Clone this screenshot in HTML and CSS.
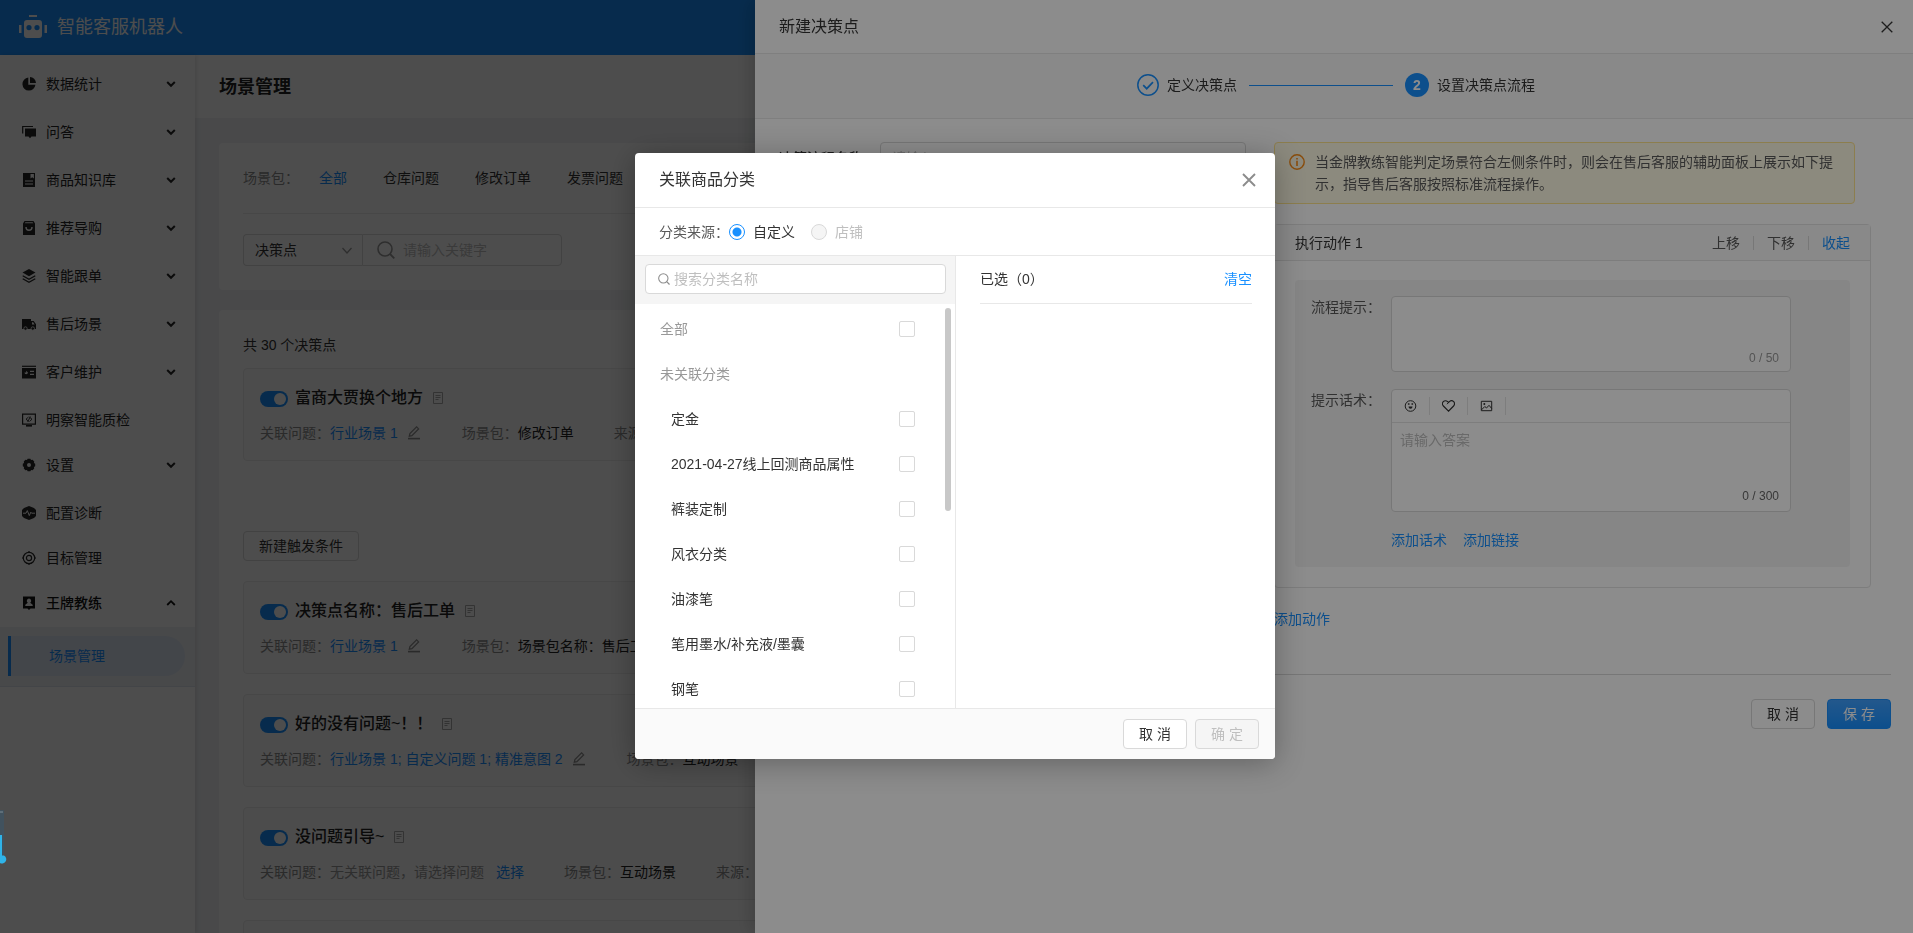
FILE: index.html
```html
<!DOCTYPE html>
<html lang="zh-CN">
<head>
<meta charset="utf-8">
<title>智能客服机器人</title>
<link rel="stylesheet" href="styles.css">
</head>
<body>
<svg class="defs" aria-hidden="true">
  <symbol id="down" viewBox="0 0 10 10"><path d="M1.2 3 5 6.8 8.8 3" fill="none" stroke="currentColor" stroke-width="2"/></symbol>
  <symbol id="up" viewBox="0 0 10 10"><path d="M1.2 7 5 3.2 8.8 7" fill="none" stroke="currentColor" stroke-width="1.8"/></symbol>
  <symbol id="note" viewBox="0 0 12 12"><path d="M1.5.5h9v11h-9zM3.5 3.5h5M3.5 5.5h5M3.5 7.5h3" fill="none" stroke="currentColor"/></symbol>
  <symbol id="edit" viewBox="0 0 14 14"><path d="M1 12.6h12" stroke="currentColor" stroke-width="1.6"/><path d="M2.3 10.2 2.9 7.6 9.6.9l2 2-6.700 6.700z" fill="none" stroke="currentColor" stroke-width="1.2"/></symbol>
  <symbol id="search" viewBox="0 0 18 18"><circle cx="8" cy="8" r="7" fill="none" stroke="currentColor" stroke-width="1.600"/><path d="m13 13 4.300 4.300" stroke="currentColor" stroke-width="1.800"/></symbol>
</svg>

<div class="app">
  <header class="topbar">
    <svg class="logo" viewBox="0 0 28 24"><path d="M10 0h8v2h-8zM0 10h2.500v8H0zM25.500 10H28v8h-2.500z" fill="#fff"/><path fill-rule="evenodd" d="M8 5h12a3 3 0 0 1 3 3v12a3 3 0 0 1-3 3H8a3 3 0 0 1-3-3V8a3 3 0 0 1 3-3zm2 5a2.600 2.600 0 1 0 0 5.200 2.600 2.600 0 0 0 0-5.200zm8 0a2.600 2.600 0 1 0 0 5.200 2.600 2.600 0 0 0 0-5.200z" fill="#fff"/></svg>
    <span class="brand">智能客服机器人</span>
  </header>
  <div class="shell">
    <nav class="side">
      <a class="nav sub" href="#"><svg viewBox="0 0 14 14"><path d="M6.300.6A6.500 6.500 0 1 0 13.400 7.700H6.300zM8 0v6h6A6.300 6.300 0 0 0 8 0z" fill="currentColor"/></svg><span>数据统计</span><svg class="arr"><use href="#down"/></svg></a>
      <a class="nav sub" href="#"><svg viewBox="0 0 14 14"><path d="M3 3.500h11v8H9.500L8 13.300 6.500 11.500H3z" fill="currentColor"/><path d="M.7 8.500V1.500H11" fill="none" stroke="currentColor" stroke-width="1.200"/></svg><span>问答</span><svg class="arr"><use href="#down"/></svg></a>
      <a class="nav sub" href="#"><svg viewBox="0 0 14 14"><path fill-rule="evenodd" d="M1 0h12v14H1zM8.500 1v4.500l1.700-1.300 1.700 1.300V1zM3 7.500v1h8v-1zm0 3v1h8v-1z" fill="currentColor"/></svg><span>商品知识库</span><svg class="arr"><use href="#down"/></svg></a>
      <a class="nav sub" href="#"><svg viewBox="0 0 14 14"><path fill-rule="evenodd" d="M2.500 0h9L13 2.500V14H1V2.500zM2.700 2.300h8.600l-.7-1H3.400z" fill="currentColor"/><path d="M4 6a3 3.200 0 0 0 6 0" fill="none" stroke="#fff" stroke-width="1.400"/></svg><span>推荐导购</span><svg class="arr"><use href="#down"/></svg></a>
      <a class="nav sub" href="#"><svg viewBox="0 0 14 14"><path d="m7 0 6.500 3.600L7 7.200.5 3.600z" fill="currentColor"/><path d="M.7 6.700 7 10.200l6.300-3.500M.7 9.700 7 13.200l6.300-3.500" fill="none" stroke="currentColor" stroke-width="1.300"/></svg><span>智能跟单</span><svg class="arr"><use href="#down"/></svg></a>
      <a class="nav sub" href="#"><svg viewBox="0 0 14 14"><path fill-rule="evenodd" d="M0 2h9v2h2.700L14 7.200V12H0zM10 5.200v2.300h2.600l-1.400-2.300z" fill="currentColor"/><circle cx="3.500" cy="11.500" r="1.700" fill="currentColor" stroke="#fff" stroke-width=".8"/><circle cx="10.800" cy="11.500" r="1.700" fill="currentColor" stroke="#fff" stroke-width=".8"/></svg><span>售后场景</span><svg class="arr"><use href="#down"/></svg></a>
      <a class="nav sub" href="#"><svg viewBox="0 0 14 14"><path d="M0 .7h14v1.200H0z" fill="currentColor"/><path fill-rule="evenodd" d="M0 3h14v10.500H0zM2.500 7.500a1.700 1.700 0 0 0 3.400 0L4.200 5.800v1.700zM8 5.700v1.200h4V5.700zm0 3v1.200h4V8.700z" fill="currentColor"/></svg><span>客户维护</span><svg class="arr"><use href="#down"/></svg></a>
      <a class="nav" href="#"><svg viewBox="0 0 14 14"><path d="M.6 1.200h12.800v10H.6z" fill="none" stroke="currentColor" stroke-width="1.200"/><path d="M4 12h6v1.600H4z" fill="currentColor"/><path d="M6.500 4 4 6.200l2.500 2M7.500 8.500 10 6.200l-2.500-2M8.300 3.500 5.700 9" fill="none" stroke="currentColor" stroke-width=".9"/></svg><span>明察智能质检</span></a>
      <a class="nav sub" href="#"><svg viewBox="0 0 14 14"><path fill-rule="evenodd" d="m5.600.8 2.800 0 .6 1.200 1.600-.2 1.600 1.600-.2 1.700 1.200.7v2.400l-1.200.7.2 1.700-1.600 1.600-1.600-.2-.6 1.200H5.600L5 12l-1.600.2-1.600-1.600.2-1.700L.8 8.200V5.800L2 5.100l-.2-1.700 1.600-1.600L5 2zM7 5a2 2 0 1 0 0 4 2 2 0 0 0 0-4z" fill="currentColor"/></svg><span>设置</span><svg class="arr"><use href="#down"/></svg></a>
      <a class="nav" href="#"><svg viewBox="0 0 14 14"><path d="m7 0 5 2 2 2v6l-2 2-5 2-5-2-2-2V4l2-2z" fill="currentColor"/><path d="M1 7.200h3l1.300-2.600 2 5 1.500-3.400.8 1H13" fill="none" stroke="#fff"/></svg><span>配置诊断</span></a>
      <a class="nav" href="#"><svg viewBox="0 0 14 14" fill="none" stroke="currentColor" stroke-width="1.200"><circle cx="7" cy="7" r="5.700"/><circle cx="7" cy="7" r="2.600"/><path d="M7 0v2M7 12v2M0 7h2M12 7h2"/></svg><span>目标管理</span></a>
      <a class="nav open" href="#"><svg viewBox="0 0 14 14"><path fill-rule="evenodd" d="M1 .5h12v12H8.500L7 14l-1.500-1.500H1zM7 2.500a2.300 2.300 0 0 0-1.200 4.200L3.300 8.800V10h7.400V8.800L8.200 6.700A2.300 2.300 0 0 0 7 2.500z" fill="currentColor"/></svg><span>王牌教练</span><svg class="arr"><use href="#up"/></svg></a>
      <div class="submenu"><a class="subitem" href="#">场景管理</a></div>
    </nav>
    <main class="main">
      <div class="pagehead"><h1>场景管理</h1></div>
      <section class="card">
        <div class="filters"><span class="label">场景包：</span><a class="on" href="#">全部</a><a href="#">仓库问题</a><a href="#">修改订单</a><a href="#">发票问题</a></div>
        <div class="searchrow">
          <div class="selbox"><select aria-label="搜索类型"><option>决策点</option></select><svg viewBox="0 0 12 12"><path d="m1.500 3 4.500 5L10.500 3" fill="none" stroke="currentColor" stroke-width="1.300"/></svg></div>
          <label class="keybox"><svg><use href="#search"/></svg><input type="text" placeholder="请输入关键字"></label>
        </div>
      </section>
      <section class="card list">
        <p class="total">共 30 个决策点</p>
        <article class="point">
          <div class="phead"><button class="switch" type="button" aria-label="启用"></button><h2>富商大贾换个地方</h2><svg><use href="#note"/></svg></div>
          <div class="meta"><span>关联问题：</span><a href="#">行业场景 1</a><svg><use href="#edit"/></svg><span class="next">场景包：</span><b>修改订单</b><span class="next2">来源：</span></div>
        </article>
        <button class="btn trigger" type="button">新建触发条件</button>
        <article class="point">
          <div class="phead"><button class="switch" type="button" aria-label="启用"></button><h2>决策点名称：售后工单</h2><svg><use href="#note"/></svg></div>
          <div class="meta"><span>关联问题：</span><a href="#">行业场景 1</a><svg><use href="#edit"/></svg><span class="next">场景包：</span><b>场景包名称：售后工单</b></div>
        </article>
        <article class="point">
          <div class="phead"><button class="switch" type="button" aria-label="启用"></button><h2>好的没有问题~！！</h2><svg><use href="#note"/></svg></div>
          <div class="meta"><span>关联问题：</span><a href="#">行业场景 1; 自定义问题 1; 精准意图 2</a><svg><use href="#edit"/></svg><span class="next">场景包：</span><b>互动场景</b></div>
        </article>
        <article class="point">
          <div class="phead"><button class="switch" type="button" aria-label="启用"></button><h2>没问题引导~</h2><svg><use href="#note"/></svg></div>
          <div class="meta"><span>关联问题：</span><i>无关联问题，请选择问题</i><a class="pick" href="#">选择</a><span class="next1">场景包：</span><b>互动场景</b><span class="next2">来源：</span></div>
        </article>
        <article class="point"></article>
      </section>
    </main>
  </div>
</div>

<div class="mask"></div>

<aside class="drawer">
  <header class="dhead"><h2>新建决策点</h2><button type="button" class="x" aria-label="关闭"><svg viewBox="0 0 12 12"><path d="m.7.700 10.600 10.600M11.300.7.700 11.300" stroke="currentColor" stroke-width="1.300"/></svg></button></header>
  <div class="steps">
    <svg class="ok" viewBox="0 0 22 22"><circle cx="11" cy="11" r="10.200" fill="none" stroke="#1890ff" stroke-width="1.500"/><path d="m6.200 11.200 3.500 3.500 6.300-6.500" fill="none" stroke="#1890ff" stroke-width="1.700"/></svg>
    <span>定义决策点</span><i class="line"></i><b class="num">2</b><span>设置决策点流程</span>
  </div>
  <div class="dbody">
    <div class="nameform"><label for="flow">决策流程名称</label><input id="flow" type="text" placeholder="请输入"></div>
    <div class="right">
      <div class="alert"><svg viewBox="0 0 16 16"><circle cx="8" cy="8" r="7.200" fill="none" stroke="#fa8c16" stroke-width="1.400"/><path d="M7.200 6.700h1.600V12H7.200zM7.200 4h1.600v1.600H7.200z" fill="#fa8c16"/></svg><p>当金牌教练智能判定场景符合左侧条件时，则会在售后客服的辅助面板上展示如下提示，指导售后客服按照标准流程操作。</p></div>
      <section class="action">
        <header><span class="t">执行动作 1</span><a href="#">上移</a><i></i><a href="#">下移</a><i></i><a class="blue" href="#">收起</a></header>
        <div class="panel">
          <label for="tip">流程提示：</label>
          <div class="box tipbox"><textarea id="tip"></textarea><span class="count">0 / 50</span></div>
          <label for="talk">提示话术：</label>
          <div class="box">
            <div class="tools">
              <button type="button" aria-label="表情"><svg viewBox="0 0 12 12"><circle cx="6" cy="6" r="5.300" fill="none" stroke="currentColor"/><path d="M3.400 4h1.600M7 4h1.600" stroke="currentColor" stroke-width="1.300"/><path d="M4 6.500h4a2 2.300 0 0 1-4 0z" fill="currentColor"/></svg></button>
              <button type="button" aria-label="收藏"><svg viewBox="0 0 13 12"><path d="M6.500 11.200 1.400 6A3 3 0 0 1 5.600 1.600l.9.900.9-.9A3 3 0 0 1 11.600 6z" fill="none" stroke="currentColor" stroke-width="1.200"/><path d="M6.500 2.500 5 4.200" stroke="currentColor"/></svg></button>
              <button type="button" aria-label="图片"><svg viewBox="0 0 12 12"><path d="M.8 1.300h10.400v9.400H.8zM.8 10l3.500-3.500L6 8l2.500-2.700L11.200 8.500" fill="none" stroke="currentColor"/><circle cx="3.800" cy="4" r="1" fill="currentColor"/></svg></button>
            </div>
            <div class="talkbox"><textarea id="talk" placeholder="请输入答案"></textarea><span class="count dark">0 / 300</span></div>
          </div>
          <div class="links"><a href="#">添加话术</a><a href="#">添加链接</a></div>
        </div>
      </section>
      <a class="addact" href="#">添加动作</a>
    </div>
  </div>
  <footer class="dfoot"><button class="btn" type="button">取 消</button><button class="btn primary" type="button">保 存</button></footer>
</aside>

<div class="mask modalwrap">
  <div class="modal" role="dialog" aria-label="关联商品分类">
    <header class="mhead"><h2>关联商品分类</h2><button type="button" class="x" aria-label="关闭"><svg viewBox="0 0 14 14"><path d="m1 1 12 12M13 1 1 13" stroke="currentColor" stroke-width="1.900"/></svg></button></header>
    <div class="source"><span>分类来源：</span><label><input type="radio" name="src" checked>自定义</label><label class="off"><input type="radio" name="src" disabled>店铺</label></div>
    <div class="transfer">
      <div class="left">
        <div class="msearch"><label><svg><use href="#search"/></svg><input type="text" placeholder="搜索分类名称"></label></div>
        <div class="cats">
          <label class="top">全部<input type="checkbox"></label>
          <div class="top">未关联分类</div>
          <label>定金<input type="checkbox"></label>
          <label>2021-04-27线上回测商品属性<input type="checkbox"></label>
          <label>裤装定制<input type="checkbox"></label>
          <label>风衣分类<input type="checkbox"></label>
          <label>油漆笔<input type="checkbox"></label>
          <label>笔用墨水/补充液/墨囊<input type="checkbox"></label>
          <label>钢笔<input type="checkbox"></label>
          <i class="thumb"></i>
        </div>
      </div>
      <div class="chosen"><div class="chead"><span>已选（0）</span><a href="#">清空</a></div></div>
    </div>
    <footer class="mfoot"><button class="btn" type="button">取 消</button><button class="btn" type="button" disabled>确 定</button></footer>
  </div>
</div>

<svg class="widget" viewBox="0 0 8 54"><path d="M0 0h3a1 1 0 0 1 1 1v44a5 5 0 0 1-4 8z" fill="#41525e"/><path d="M0 2h3" stroke="#7d8b94"/><path d="M0 25h2v20.500h2a4 4 0 0 1-4 7.500z" fill="#2fb4e9"/></svg>
</body>
</html>
```

FILE: styles.css
```css
* { box-sizing: border-box; }
body {
  margin: 0;
  font: 14px/22px "Liberation Sans", "Noto Sans CJK SC", sans-serif;
  color: #333;
  overflow: hidden;
}
h1, h2, p { margin: 0; font-weight: 400; }
a { color: inherit; text-decoration: none; }
i { font-style: normal; }
b { font-weight: 400; }
svg { flex: none; display: block; }
button, input, select, textarea { font: inherit; color: inherit; padding: 0; margin: 0; border: 0; background: none; outline: 0; }
::placeholder { color: #bfbfbf; opacity: 1; }
.defs { position: absolute; width: 0; height: 0; }

/* Application */
.app { height: 100vh; display: flex; flex-direction: column; overflow: hidden; isolation: isolate; }
.topbar { flex: none; height: 55px; background: #1890ff; display: flex; align-items: center; gap: 10px; padding: 0 19px 2px; }
.logo { width: 28px; height: 24px; }
.brand { color: #fff; font-size: 18px; line-height: 28px; }
.shell { flex: 1; min-height: 0; display: flex; }
.side { flex: none; width: 195px; padding-top: 9px; background: #fff; box-shadow: 1px 0 5px rgba(0, 0, 0, .12); position: relative; z-index: 1; }
.nav { display: flex; align-items: center; height: 40px; margin-bottom: 5px; padding: 0 19px 0 22px; gap: 10px; color: #262626; }
.nav.sub { margin-bottom: 8px; }
.nav svg { width: 14px; height: 14px; }
.nav span { flex: 1; }
.nav .arr { width: 10px; height: 10px; }
.nav.open { margin-bottom: 4px; font-weight: 500; color: #111; }
.submenu { background: #eef1f6; padding: 9px 10px 10px 8px; border-bottom: 1px solid #dfe5ef; }
.subitem { display: block; line-height: 40px; padding-left: 38px; color: #1890ff; background: #dfe7f5; border-left: 3px solid #1890ff; border-radius: 0 20px 20px 0; }
.main { flex: 1; min-width: 0; background: #f0f2f5; overflow: hidden; }
.pagehead { height: 63px; padding: 18px 24px; background: #fff; }
.pagehead h1 { font-size: 18px; line-height: 28px; font-weight: 700; color: #222; }
.card { margin: 25px 24px 20px; padding: 0 24px; background: #fff; border-radius: 4px; }
.filters { display: flex; gap: 36px; padding: 24px 0; border-bottom: 1px solid #ececec; }
.filters .label { color: #8c8c8c; width: 40px; white-space: nowrap; }
.filters .on { color: #1890ff; }
.searchrow { display: flex; padding: 20px 0 24px; }
.selbox { position: relative; width: 119px; height: 32px; border: 1px solid #d9d9d9; border-right: 0; border-radius: 4px 0 0 4px; }
.selbox select { appearance: none; width: 100%; height: 30px; padding-left: 11px; }
.selbox svg { position: absolute; right: 9px; top: 10px; width: 12px; height: 12px; color: #999; }
.keybox { display: flex; align-items: center; gap: 8px; width: 200px; height: 32px; padding: 0 14px; border: 1px solid #d9d9d9; border-radius: 0 4px 4px 0; color: #999; }
.keybox svg { width: 18px; height: 18px; }
.keybox input { width: 100%; }
.card.list { margin-top: 0; padding-top: 24px; }
.total { padding-bottom: 12px; }
.point { height: 93px; margin-bottom: 20px; padding: 17px 16px 16px; background: #fafafa; border: 1px solid #ececec; border-radius: 4px; }
.phead { display: flex; align-items: center; height: 24px; }
.phead h2 { font-size: 16px; line-height: 24px; font-weight: 500; color: #222; margin: 0 9px 0 7px; }
.phead svg { width: 12px; height: 12px; color: #aaa; }
.switch { width: 28px; height: 16px; border-radius: 8px; background: #1890ff; padding: 2px; margin-top: 2px; }
.switch::after { content: ""; display: block; width: 12px; height: 12px; margin-left: auto; border-radius: 50%; background: #fff; }
.meta { display: flex; align-items: center; margin-top: 12px; white-space: nowrap; color: #8c8c8c; }
.meta a { color: #1890ff; }
.meta b { color: #222; }
.meta svg { width: 14px; height: 14px; margin-left: 9px; }
.meta i { color: #999; }
.meta .next { margin-left: 41px; }
.meta .next1, .meta .next2 { margin-left: 40px; }
.meta .pick { margin-left: 12px; }
.btn { min-width: 64px; height: 30px; padding: 0 15px; border: 1px solid #d9d9d9; border-radius: 4px; background: #fff; }
.btn:disabled { background: #f5f5f5; color: #bfbfbf; }
.btn.primary { background: linear-gradient(#40a0ff, #1890ff); border-color: #1890ff; color: #fff; }
.trigger { display: block; margin: 70px 0 20px; }
.widget { position: fixed; left: 0; top: 810px; width: 8px; height: 54px; }

/* Layers */
.mask { position: fixed; inset: 0; background: rgba(0, 0, 0, .45); }
.x svg { width: 12px; height: 12px; }

/* Drawer */
.drawer { position: fixed; inset: 0 0 0 755px; background: #fff; overflow: hidden; box-shadow: -6px 0 16px rgba(0, 0, 0, .15); }
.dhead { display: flex; align-items: center; justify-content: space-between; height: 54px; padding: 0 20px 0 24px; border-bottom: 1px solid #e8e8e8; }
.dhead h2 { font-size: 16px; color: #333; }
.steps { display: flex; align-items: center; justify-content: center; height: 65px; padding: 0 0 2px 4px; background: #fafafa; border-bottom: 1px solid #e8e8e8; }
.steps .ok { width: 22px; height: 22px; margin-right: 8px; }
.line { width: 144px; height: 1px; margin: 0 12px; background: #1890ff; }
.num { width: 24px; line-height: 24px; margin-right: 8px; border-radius: 50%; background: #1890ff; color: #fff; text-align: center; font-weight: 700; }
.dbody { display: grid; grid-template-columns: 467fr 617fr; gap: 28px; margin: 0 22px 0 24px; padding: 23px 0 44px; border-bottom: 1px solid #d9d9d9; }
.nameform { display: flex; align-items: start; line-height: 32px; }
.nameform label { flex: none; width: 101px; font-weight: 500; }
.nameform input { flex: 1; min-width: 0; height: 32px; padding: 0 11px; border: 1px solid #d9d9d9; border-radius: 4px; }
.alert { display: flex; align-items: start; gap: 10px; margin-right: 36px; padding: 8px 15px 8px 14px; border: 1px solid #ffe58f; border-radius: 4px; background: #fffbe6; color: #595959; }
.alert svg { width: 16px; height: 16px; margin-top: 3px; }
.action { margin: 20px 20px 0 0; border: 1px solid #e3e3e3; border-radius: 4px; }
.action header { display: flex; align-items: center; height: 36px; padding: 0 20px; background: #fafafa; border-bottom: 1px solid #e3e3e3; color: #595959; }
.action .t { flex: 1; color: #333; }
.action header i { width: 1px; height: 14px; margin: 0 13px; background: #d9d9d9; }
.action .blue, .links a, .addact { color: #1890ff; }
.panel { display: grid; grid-template-columns: 80px minmax(0, 400px); row-gap: 17px; margin: 19px 20px 20px; padding: 16px; background: #f5f5f5; border-radius: 4px; color: #595959; }
.box { background: #fff; border: 1px solid #d9d9d9; border-radius: 4px; }
.tipbox, .talkbox { position: relative; }
.panel textarea { display: block; width: 100%; height: 74px; padding: 5px 11px; resize: none; }
.panel .talkbox textarea { height: 88px; padding: 6px 8px; }
.count { position: absolute; right: 11px; bottom: 2px; font-size: 12px; color: #999; }
.count.dark { bottom: 4px; color: #666; }
.tools { display: flex; align-items: center; height: 33px; border-bottom: 1px solid #e3e3e3; color: #333; }
.tools button { display: flex; justify-content: center; align-items: center; width: 38px; height: 18px; border-right: 1px solid #e3e3e3; }
.tools svg { width: 13px; height: 12px; }
.links { grid-column: 2; display: flex; gap: 16px; }
.addact { display: block; margin-top: 20px; }
.dfoot { display: flex; justify-content: end; gap: 12px; padding: 24px 22px; }

/* Modal */
.modalwrap { display: flex; justify-content: center; align-items: start; padding: 153px 3px 0 0; }
.modal { width: 640px; background: #fff; border-radius: 4px; overflow: hidden; box-shadow: 0 4px 30px rgba(0, 0, 0, .3); }
.mhead { display: flex; align-items: center; justify-content: space-between; height: 55px; padding: 0 19px 0 24px; border-bottom: 1px solid #e8e8e8; }
.mhead h2 { font-size: 16px; }
.mhead .x { color: #8c8c8c; }
.mhead .x svg { width: 14px; height: 14px; }
.source { display: flex; align-items: center; height: 48px; padding: 0 24px; border-bottom: 1px solid #e8e8e8; }
.source span { color: #595959; }
.source label { display: flex; align-items: center; gap: 8px; margin-right: 16px; }
.source .off { color: #bfbfbf; }
.source input { appearance: none; width: 16px; height: 16px; border: 1px solid #d9d9d9; border-radius: 50%; background: #f5f5f5; }
.source input:checked { border-color: #1890ff; background: radial-gradient(circle, #1890ff 4px, #fff 5px); }
.transfer { display: grid; grid-template-columns: 321fr 319fr; height: 452px; }
.left { display: flex; flex-direction: column; min-height: 0; border-right: 1px solid #e8e8e8; }
.msearch { padding: 8px 9px 10px 10px; background: #f5f5f5; }
.msearch label { display: flex; align-items: center; gap: 4px; height: 30px; padding: 0 12px; background: #fff; border: 1px solid #d9d9d9; border-radius: 4px; color: #8c8c8c; }
.msearch svg { width: 12px; height: 12px; }
.msearch input { flex: 1; }
.cats { flex: 1; min-height: 0; position: relative; overflow: hidden; padding-top: 2px; }
.cats label, .cats div { display: flex; align-items: center; justify-content: space-between; height: 45px; padding: 0 40px 0 36px; }
.cats .top { padding-left: 25px; color: #999; }
.cats input { appearance: none; width: 16px; height: 16px; border: 1px solid #d9d9d9; border-radius: 2px; background: #fff; }
.thumb { position: absolute; right: 4px; top: 4px; width: 6px; height: 203px; border-radius: 3px; background: #c8c8c8; }
.chosen { padding: 0 23px 0 24px; }
.chead { display: flex; justify-content: space-between; padding: 12px 0 13px; border-bottom: 1px solid #e8e8e8; }
.chead a { color: #1890ff; }
.mfoot { display: flex; justify-content: end; gap: 8px; padding: 10px 16px; background: #fafafa; border-top: 1px solid #e8e8e8; }
```
